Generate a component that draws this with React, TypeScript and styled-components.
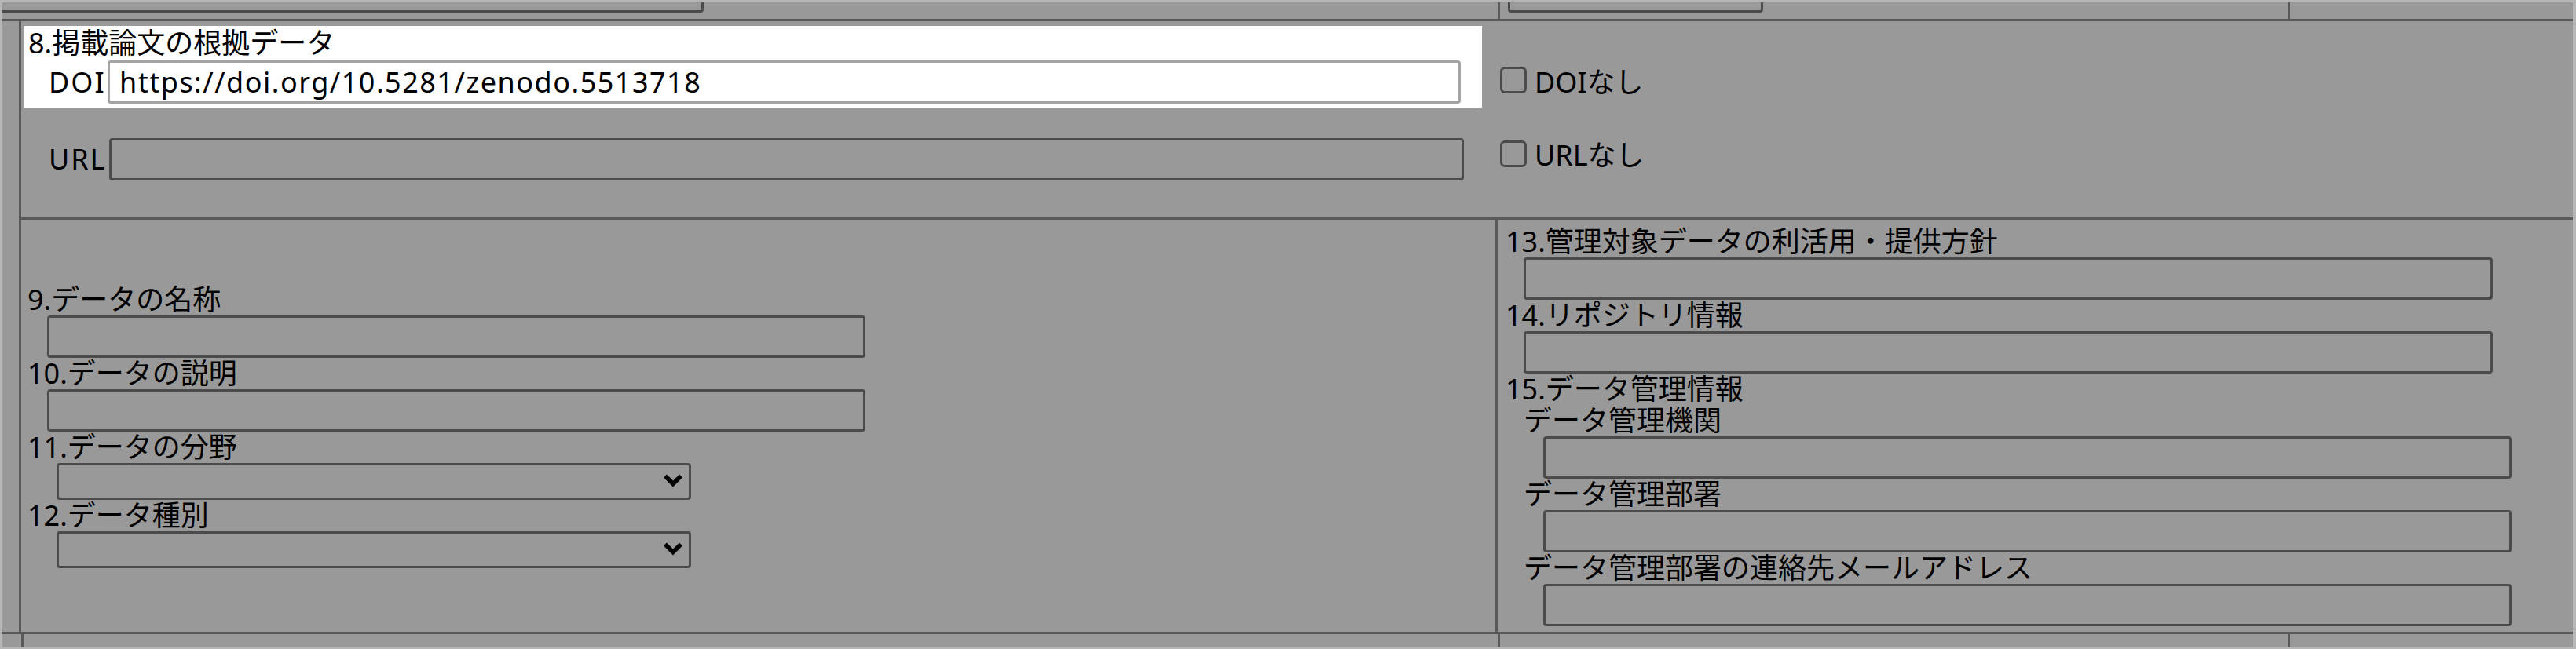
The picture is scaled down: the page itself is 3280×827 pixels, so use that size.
import React from 'react';
import styled, { createGlobalStyle } from 'styled-components';

const LINE = '#595959';
const EDGE = '#4b4b4b';

const GlobalStyle = createGlobalStyle`
  html, body {
    margin: 0;
    padding: 0;
    background: #999999;
  }
`;

const Frame = styled.div`
  width: 3280px;
  height: 827px;
  box-sizing: border-box;
  border-style: solid;
  border-color: #b6b6b6;
  border-width: 3px 4px 3px 3px;
  background: #999999;
  overflow: hidden;
  display: flex;
  flex-direction: column;
  font-family: "Noto Sans", "Noto Sans CJK JP", sans-serif;
  font-size: 36px;
  color: #000;
`;

const TopRow = styled.div`
  display: grid;
  grid-template-columns: 1904px 1006px 1fr;
  height: 24px;
  flex: none;
  box-sizing: border-box;
  border-bottom: 3px solid ${LINE};
`;

const TopCell = styled.div<{ $divider?: boolean }>`
  display: flex;
  align-items: flex-end;
  padding-bottom: 8px;
  overflow: hidden;
  box-sizing: border-box;
  border-left: ${p => (p.$divider ? `3px solid ${LINE}` : 'none')};
`;

const MidBlock = styled.div`
  display: grid;
  grid-template-columns: 24px 1fr;
  height: 781px;
  flex: none;
  box-sizing: border-box;
  border-bottom: 3px solid ${LINE};
`;

const SideCol = styled.div`
  border-right: 3px solid ${LINE};
`;

const MainCol = styled.div`
  display: grid;
  grid-template-rows: 253px 1fr;
`;

const LinkSection = styled.div`
  display: grid;
  grid-template-columns: 1857px 1fr;
  grid-template-rows: 104px 1fr;
  column-gap: 23px;
  padding: 6px 0 0 3px;
  box-sizing: border-box;
  border-bottom: 3px solid ${LINE};
`;

const HighlightBox = styled.div`
  background: #ffffff;
  padding: 3px 0 5px 6px;
  box-sizing: border-box;
`;

const Title = styled.div`
  line-height: 38px;
  white-space: nowrap;
`;

const FieldLine = styled.div<{ $indent: number; $top: number }>`
  display: flex;
  align-items: center;
  align-self: start;
  height: 55px;
  margin-top: ${p => p.$top}px;
  padding-left: ${p => p.$indent}px;
`;

const FieldName = styled.span<{ $w: number }>`
  flex: none;
  width: ${p => p.$w}px;
  line-height: 40px;
  letter-spacing: 2px;
  white-space: nowrap;
`;

const CheckCell = styled.label<{ $top: number; $h: number }>`
  display: flex;
  align-items: center;
  align-self: start;
  gap: 10px;
  height: ${p => p.$h}px;
  margin-top: ${p => p.$top}px;
  line-height: 40px;
  white-space: nowrap;
`;

const CheckBox = styled.input.attrs({ type: 'checkbox' })<{ $lift?: number }>`
  appearance: none;
  flex: none;
  width: 34px;
  height: 34px;
  margin: 0 0 ${p => p.$lift ?? 0}px;
  box-sizing: border-box;
  border: 3px solid ${EDGE};
  border-radius: 6px;
  background: transparent;
`;

const DetailSection = styled.div`
  display: grid;
  grid-template-columns: 1880px 1fr;
`;

const Column = styled.div<{ $pad: number; $divider?: boolean }>`
  display: flex;
  flex-direction: column;
  justify-content: center;
  padding-left: ${p => p.$pad}px;
  box-sizing: border-box;
  border-right: ${p => (p.$divider ? `3px solid ${LINE}` : 'none')};
`;

const Label = styled.div<{ $indent?: number }>`
  line-height: 40px;
  height: 40px;
  margin-left: ${p => p.$indent ?? 0}px;
  white-space: nowrap;
`;

const TextBox = styled.input<{ $w: number; $ml?: number; $light?: boolean }>`
  display: block;
  flex: none;
  width: ${p => p.$w}px;
  height: ${p => (p.$light ? 55 : 54)}px;
  margin: 0 0 0 ${p => p.$ml ?? 0}px;
  padding: 0 12px;
  box-sizing: border-box;
  border: 3px solid ${p => (p.$light ? '#a4a4a4' : EDGE)};
  border-radius: 4px;
  background: ${p => (p.$light ? '#ffffff' : 'transparent')};
  font-family: "Noto Sans", "Noto Sans CJK JP", sans-serif;
  font-size: 36px;
  letter-spacing: 1.5px;
  color: #000;
  outline: none;
`;

const SelectWrap = styled.div<{ $w: number; $ml: number }>`
  position: relative;
  width: ${p => p.$w}px;
  height: 47px;
  margin-left: ${p => p.$ml}px;
`;

const Select = styled.select`
  appearance: none;
  display: block;
  width: 100%;
  height: 100%;
  margin: 0;
  box-sizing: border-box;
  border: 3px solid ${EDGE};
  border-radius: 4px;
  background: transparent;
  font-family: "Noto Sans", "Noto Sans CJK JP", sans-serif;
  font-size: 30px;
  outline: none;
`;

const Chevron = styled.svg`
  position: absolute;
  right: 10px;
  top: 50%;
  transform: translateY(-50%);
  margin-top: -1px;
  pointer-events: none;
`;

const BottomRow = styled.div`
  display: grid;
  grid-template-columns: 24px 1880px 1006px 1fr;
  flex: 1;
`;

const BottomCell = styled.div<{ $divider?: boolean }>`
  border-left: ${p => (p.$divider ? `3px solid ${LINE}` : 'none')};
`;

const DropDown = ({ w, ml }: { w: number; ml: number }) => (
  <SelectWrap $w={w} $ml={ml}>
    <Select defaultValue="">
      <option value=""></option>
    </Select>
    <Chevron width="26" height="18" viewBox="0 0 26 18">
      <polyline points="3,3.5 13,13.5 23,3.5" fill="none" stroke="#000" strokeWidth="5.5" />
    </Chevron>
  </SelectWrap>
);

const App = () => {
  return (
    <>
      <GlobalStyle />
      <Frame>
        <TopRow>
          <TopCell>
            <TextBox $w={899} $ml={-6} readOnly />
          </TopCell>
          <TopCell $divider>
            <TextBox $w={325} $ml={10} readOnly />
          </TopCell>
          <TopCell $divider />
        </TopRow>

        <MidBlock>
          <SideCol />
          <MainCol>
            <LinkSection>
              <HighlightBox>
                <Title>8.掲載論文の根拠データ</Title>
                <FieldLine $indent={26} $top={3}>
                  <FieldName $w={75}>DOI</FieldName>
                  <TextBox $w={1723} $light defaultValue="https://doi.org/10.5281/zenodo.5513718" />
                </FieldLine>
              </HighlightBox>
              <CheckCell $top={44} $h={55}>
                <CheckBox $lift={6} />
                <span>DOIなし</span>
              </CheckCell>
              <FieldLine $indent={32} $top={38}>
                <FieldName $w={77}>URL</FieldName>
                <TextBox $w={1725} />
              </FieldLine>
              <CheckCell $top={38} $h={46}>
                <CheckBox $lift={4} />
                <span>URLなし</span>
              </CheckCell>
            </LinkSection>

            <DetailSection>
              <Column $pad={8} $divider>
                <Label>9.データの名称</Label>
                <TextBox $w={1042} $ml={25} />
                <Label>10.データの説明</Label>
                <TextBox $w={1042} $ml={25} />
                <Label>11.データの分野</Label>
                <DropDown w={808} ml={37} />
                <Label>12.データ種別</Label>
                <DropDown w={808} ml={37} />
              </Column>
              <Column $pad={10}>
                <Label>13.管理対象データの利活用・提供方針</Label>
                <TextBox $w={1234} $ml={23} />
                <Label>14.リポジトリ情報</Label>
                <TextBox $w={1234} $ml={23} />
                <Label>15.データ管理情報</Label>
                <Label $indent={23}>データ管理機関</Label>
                <TextBox $w={1233} $ml={48} />
                <Label $indent={23}>データ管理部署</Label>
                <TextBox $w={1233} $ml={48} />
                <Label $indent={23}>データ管理部署の連絡先メールアドレス</Label>
                <TextBox $w={1233} $ml={48} />
              </Column>
            </DetailSection>
          </MainCol>
        </MidBlock>

        <BottomRow>
          <BottomCell />
          <BottomCell $divider />
          <BottomCell $divider />
          <BottomCell $divider />
        </BottomRow>
      </Frame>
    </>
  );
};

export default App;
